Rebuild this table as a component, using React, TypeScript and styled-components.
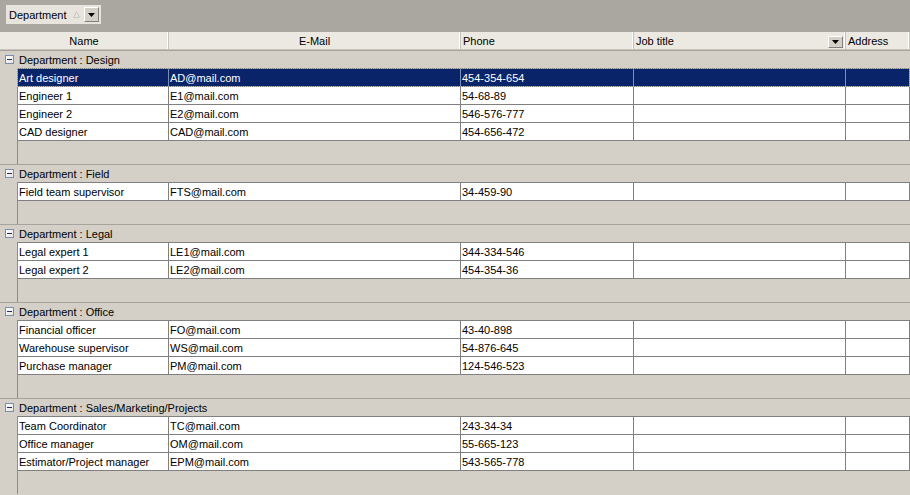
import React from "react";
import styled, { createGlobalStyle, css } from "styled-components";

const Global = createGlobalStyle`
  html, body { margin: 0; padding: 0; background: #d4d0c8; overflow: hidden; }
  body { font-family: "Liberation Sans", Arial, sans-serif; font-size: 11px; color: #000; }
`;

const Grid = styled.div`
  width: 910px;
  height: 495px;
  overflow: hidden;
  background: #d4d0c8;
  display: flex;
  flex-direction: column;
`;

const GroupPanel = styled.div`
  height: 32px;
  flex: none;
  background: #a9a7a0;
  box-sizing: border-box;
  padding: 5px 0 0 6px;
`;

const Chip = styled.div`
  display: inline-flex;
  align-items: center;
  height: 19px;
  box-sizing: border-box;
  background: #e6e4dd;
  padding: 0 2px 0 3px;
`;

const ChipLabel = styled.span`
  line-height: 19px;
  padding-top: 1px;
  margin-right: 7px;
`;

const DropButton = styled.div<{ $small?: boolean }>`
  width: 15px;
  height: ${(p) => (p.$small ? 12 : 15)}px;
  box-sizing: border-box;
  background: #d4d0c8;
  border: 1px solid;
  border-color: #fff #808080 #808080 #fff;
  display: flex;
  align-items: center;
  justify-content: center;
  flex: none;
`;

const HeaderRow = styled.div`
  display: flex;
  height: 18px;
  flex: none;
  box-sizing: border-box;
  background: #ece9e2;
  border-bottom: 1px solid #c5c2b8;
`;

const HeaderCell = styled.div<{ $w?: number; $center?: boolean }>`
  ${(p) => (p.$w ? css`width: ${p.$w}px; flex: none;` : css`flex: 1;`)}
  box-sizing: border-box;
  display: flex;
  align-items: center;
  justify-content: ${(p) => (p.$center ? "center" : "flex-start")};
  padding: 2px 2px 0 2px;
  border-right: 1px solid #c6c3b9;
  box-shadow: inset -2px 0 0 -1px #fff;
  line-height: 15px;
  white-space: nowrap;
`;

const HeaderText = styled.span`
  flex: 1;
`;

const GroupBlock = styled.div`
  border-top: 1px solid #a6a49c;
  flex: none;
`;

const GroupHeader = styled.div`
  height: 17px;
  display: flex;
  align-items: center;
  padding-left: 5px;
  gap: 5px;
  white-space: nowrap;
`;

const Toggle = styled.div`
  width: 9px;
  height: 9px;
  box-sizing: border-box;
  border: 1px solid #7a8fb0;
  background: linear-gradient(135deg, #ffffff 0%, #e4e2dc 100%);
  position: relative;
  flex: none;
  &::after {
    content: "";
    position: absolute;
    left: 1px;
    top: 3px;
    width: 5px;
    height: 1px;
    background: #1f2f6b;
  }
`;

const GroupBody = styled.div`
  margin-left: 17px;
  border-left: 1px solid #8c8c8c;
`;

const Rows = styled.div`
  border-top: 1px solid #808080;
`;

const Row = styled.div<{ $selected?: boolean }>`
  display: flex;
  height: 18px;
  box-sizing: border-box;
  border-bottom: 1px solid #808080;
  background: ${(p) => (p.$selected ? "#0a246a" : "#fff")};
  color: ${(p) => (p.$selected ? "#fff" : "#000")};
  position: relative;
  ${(p) =>
    p.$selected &&
    css`
      &::after {
        content: "";
        position: absolute;
        inset: -1px 0 -1px -1px;
        border: 1px dotted #b8b8b8;
        pointer-events: none;
      }
    `}
`;

const Cell = styled.div<{ $w?: number; $selected?: boolean }>`
  ${(p) => (p.$w ? css`width: ${p.$w}px; flex: none;` : css`flex: 1;`)}
  box-sizing: border-box;
  border-right: 1px solid ${(p) => (p.$selected ? "#7d8db5" : "#808080")};
  padding: 1px 2px 0 1px;
  line-height: 16px;
  white-space: nowrap;
  overflow: hidden;
`;

const Gap = styled.div`
  height: 23px;
`;

const SortGlyph = () => (
  <svg width="7" height="7" viewBox="0 0 7 7" style={{ marginRight: 4 }}>
    <path d="M3.5 0.5 L6.5 6.5 L0.5 6.5 Z" fill="none" stroke="#c9c7c0" strokeWidth="1" />
  </svg>
);

const DownArrow = () => (
  <svg width="7" height="4" viewBox="0 0 7 4">
    <path d="M0 0 H7 L3.5 4 Z" fill="#000" />
  </svg>
);

type Person = [string, string, string];

const groups: { name: string; rows: Person[] }[] = [
  {
    name: "Design",
    rows: [
      ["Art designer", "AD@mail.com", "454-354-654"],
      ["Engineer 1", "E1@mail.com", "54-68-89"],
      ["Engineer 2", "E2@mail.com", "546-576-777"],
      ["CAD designer", "CAD@mail.com", "454-656-472"],
    ],
  },
  { name: "Field", rows: [["Field team supervisor", "FTS@mail.com", "34-459-90"]] },
  {
    name: "Legal",
    rows: [
      ["Legal expert 1", "LE1@mail.com", "344-334-546"],
      ["Legal expert 2", "LE2@mail.com", "454-354-36"],
    ],
  },
  {
    name: "Office",
    rows: [
      ["Financial officer", "FO@mail.com", "43-40-898"],
      ["Warehouse supervisor", "WS@mail.com", "54-876-645"],
      ["Purchase manager", "PM@mail.com", "124-546-523"],
    ],
  },
  {
    name: "Sales/Marketing/Projects",
    rows: [
      ["Team Coordinator", "TC@mail.com", "243-34-34"],
      ["Office manager", "OM@mail.com", "55-665-123"],
      ["Estimator/Project manager", "EPM@mail.com", "543-565-778"],
    ],
  },
];

export default function App() {
  return (
    <>
      <Global />
      <Grid>
        <GroupPanel>
          <Chip>
            <ChipLabel>Department</ChipLabel>
            <SortGlyph />
            <DropButton>
              <DownArrow />
            </DropButton>
          </Chip>
        </GroupPanel>
        <HeaderRow>
          <HeaderCell $w={169} $center>Name</HeaderCell>
          <HeaderCell $w={292} $center>E-Mail</HeaderCell>
          <HeaderCell $w={173}>Phone</HeaderCell>
          <HeaderCell $w={212}>
            <HeaderText>Job title</HeaderText>
            <DropButton $small>
              <DownArrow />
            </DropButton>
          </HeaderCell>
          <HeaderCell>Address</HeaderCell>
        </HeaderRow>
        {groups.map((g, gi) => (
          <GroupBlock key={g.name}>
            <GroupHeader>
              <Toggle />
              <span>Department : {g.name}</span>
            </GroupHeader>
            <GroupBody>
              <Rows>
                {g.rows.map((r, ri) => {
                  const sel = gi === 0 && ri === 0;
                  return (
                    <Row key={r[0]} $selected={sel}>
                      <Cell $w={151} $selected={sel}>{r[0]}</Cell>
                      <Cell $w={292} $selected={sel}>{r[1]}</Cell>
                      <Cell $w={173} $selected={sel}>{r[2]}</Cell>
                      <Cell $w={212} $selected={sel} />
                      <Cell $selected={sel} />
                    </Row>
                  );
                })}
              </Rows>
              <Gap />
            </GroupBody>
          </GroupBlock>
        ))}
      </Grid>
    </>
  );
}
